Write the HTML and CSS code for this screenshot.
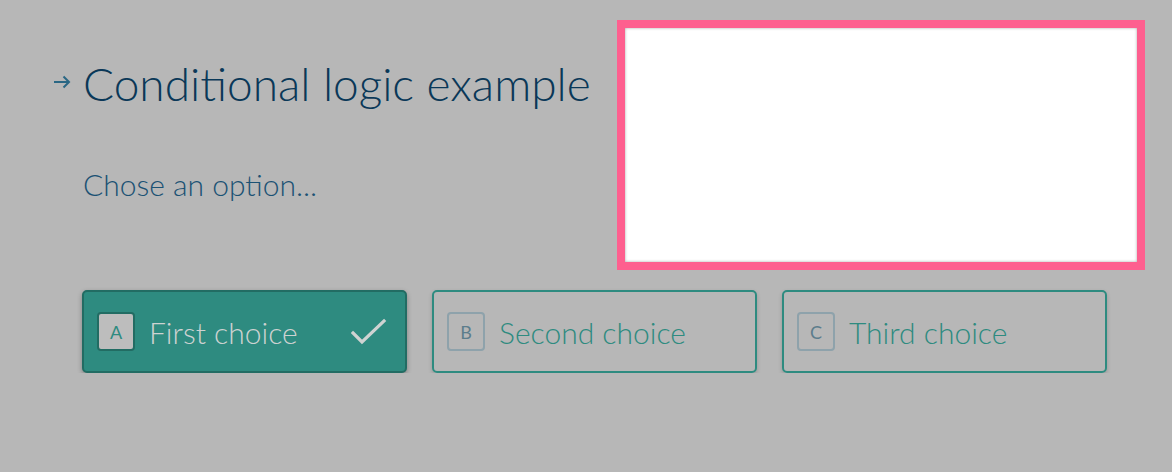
FILE: index.html
```html
<!DOCTYPE html>
<html lang="en">
<head>
  <meta charset="UTF-8" />
  <meta name="viewport" content="width=device-width, initial-scale=1.0" />
  <title>Conditional logic example</title>
  <link rel="stylesheet" href="styles.css">
</head>
<body>
  <div class="page">
    <div class="header">
      <div class="intro">
        <h1 class="title">
          <svg class="arrow" width="18" height="14" viewBox="0 0 18 14">
            <path d="M1 7 H16 M10.5 1.5 L16 7 L10.5 12.5" fill="none" stroke="#2a6784" stroke-width="2" />
          </svg>
          Conditional logic example
        </h1>
        <p class="question">Chose an option...</p>
      </div>
      <div class="highlight"><div class="highlight-inner"></div></div>
    </div>

    <div class="choices">
      <div class="choice selected">
        <span class="key">A</span>
        <span class="label">First choice</span>
        <svg class="check" width="36" height="28" viewBox="0 0 36 28">
          <path d="M2 15 L11 24 L33 3" fill="none" stroke="#cfd3d2" stroke-width="3.2" stroke-linecap="square" />
        </svg>
      </div>
      <div class="choice">
        <span class="key">B</span>
        <span class="label">Second choice</span>
      </div>
      <div class="choice">
        <span class="key">C</span>
        <span class="label">Third choice</span>
      </div>
    </div>
  </div>
</body>
</html>
```

FILE: styles.css
```css
body { margin: 0; background: #b7b7b7; font-family: "Lato", "Open Sans", sans-serif; }
.page { padding: 20px 27px 0 53px; }
.header { display: flex; justify-content: space-between; align-items: flex-start; }
.intro { padding-top: 36px; }
.title { display: flex; align-items: center; gap: 12px; margin: 0; font-size: 46px; font-weight: 300; line-height: 56px; color: #0a3858; }
.arrow { flex: none; width: 18px; height: 14px; position: relative; top: -2px; }
.question { margin: 54px 0 0 30px; font-size: 30px; font-weight: 300; line-height: 36px; color: #1b5274; }
.highlight { width: 528px; height: 250px; box-sizing: border-box; border: 8px solid #fe5f8f; background: #fff; }
.highlight-inner { height: 100%; box-shadow: inset 0 0 3px rgba(0, 0, 0, 0.35); }
.choices { display: flex; gap: 25px; margin: 20px 0 0 29px; }
.choice { width: 325px; height: 83px; box-sizing: border-box; display: flex; align-items: center; padding: 0 13px; border: 2px solid #2e8b80; border-radius: 5px; box-shadow: 0 2px 4px rgba(0, 0, 0, 0.18); color: #2e8b80; }
.choice.selected { background: #2e8b80; border-color: #226c63; color: #cdd2d1; box-shadow: 0 2px 5px rgba(0, 0, 0, 0.3); }
.key { width: 38px; height: 39px; box-sizing: border-box; display: flex; align-items: center; justify-content: center; border: 2px solid #8ea2ab; border-radius: 4px; font-size: 18px; font-weight: 400; color: #5c7d8c; }
.selected .key { background: #bdbdbd; border-color: #226c63; color: #2e8b80; }
.label { margin-left: 14px; font-size: 30px; font-weight: 300; }
.check { margin-left: auto; margin-right: 5px; }
```
